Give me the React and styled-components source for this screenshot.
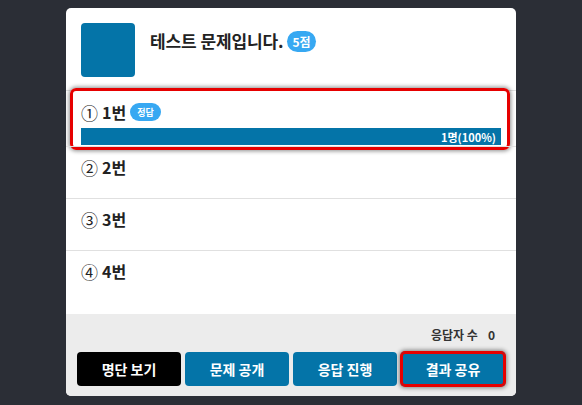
import React from "react";
import styled, { createGlobalStyle, css } from "styled-components";

const Global = createGlobalStyle`
  html, body { margin: 0; padding: 0; background: #2b2e36; }
  body { font-family: "Noto Sans CJK KR", "Noto Sans", sans-serif; }
  * { box-sizing: border-box; }
`;

const Page = styled.div`
  width: 582px;
  height: 405px;
  padding-top: 8px;
  display: flex;
  justify-content: center;
`;

const Card = styled.div`
  width: 450px;
  height: 388px;
  background: #fff;
  border-radius: 5px;
  overflow: hidden;
  display: flex;
  flex-direction: column;
`;

const Header = styled.div`
  display: flex;
  gap: 15px;
  padding: 15px 15px 13px;
`;

const Thumb = styled.div`
  width: 54px;
  height: 54px;
  border-radius: 4px;
  background: #0474a8;
  flex-shrink: 0;
`;

const Title = styled.div`
  display: flex;
  align-items: center;
  gap: 3px;
  height: 24px;
  margin-top: 5px;
  font-size: 17px;
  font-weight: 700;
  color: #222;
  letter-spacing: -0.1px;
`;

const Badge = styled.span`
  display: inline-flex;
  align-items: center;
  justify-content: center;
  background: #37a8f2;
  color: #fff;
  font-weight: 700;
  border-radius: 999px;
  ${(p) =>
    p.$small
      ? css`
          font-size: 9px;
          height: 18px;
          padding: 0 7px;
          margin-left: 4px;
        `
      : css`
          font-size: 12px;
          height: 21px;
          padding: 0 6px;
          margin-top: 2px;
        `}
`;

const List = styled.div`
  flex: 1;
  display: flex;
  flex-direction: column;
`;

const Row = styled.div`
  position: relative;
  border-top: 1px solid #e0e0e0;
  padding: ${(p) => (p.$tall ? "10px" : "9px")} 15px 0;
  height: ${(p) => (p.$tall ? "56px" : "52px")};
  &:last-child { height: auto; flex: 1; }
`;

const Label = styled.div`
  display: flex;
  align-items: center;
  height: 22px;
  font-size: 16px;
  font-weight: 700;
  color: #222;
`;

const Circle = styled.span`
  font-weight: 400;
  font-size: 17px;
  margin-right: 4px;
  color: #222;
`;

const Bar = styled.div`
  margin-top: 5px;
  height: 17px;
  background: #0474a8;
  color: #fff;
  font-size: 11px;
  font-weight: 700;
  display: flex;
  align-items: center;
  justify-content: flex-end;
  padding-right: 5px;
`;

const Highlight = styled.div`
  position: absolute;
  left: 4px;
  right: 6px;
  top: -3px;
  bottom: -4px;
  border: 3px solid #e60000;
  border-radius: 6px;
  box-shadow: 0 0 4px 1px rgba(0, 0, 0, 0.45);
  pointer-events: none;
`;

const Footer = styled.div`
  background: #ececec;
  padding: 10px 11px 10px;
  display: flex;
  flex-direction: column;
  gap: 8px;
`;

const Count = styled.div`
  align-self: flex-end;
  margin-right: 10px;
  font-size: 12px;
  font-weight: 700;
  color: #333;
  height: 20px;
  display: flex;
  align-items: center;
  gap: 10px;
`;

const Buttons = styled.div`
  display: grid;
  grid-template-columns: repeat(4, 1fr);
  gap: 4px;
`;

const Button = styled.button`
  height: 34px;
  border: none;
  border-radius: 4px;
  background: ${(p) => (p.$dark ? "#000" : "#0474a8")};
  color: #fff;
  font-family: inherit;
  font-size: 14px;
  font-weight: 700;
  ${(p) =>
    p.$focus &&
    css`
      box-shadow: inset 0 0 0 2px #e60000, 0 0 0 1px #e60000,
        0 0 4px 2px rgba(0, 0, 0, 0.45);
    `}
`;

const options = [
  { n: "①", label: "1번", correct: true, pct: "1명(100%)" },
  { n: "②", label: "2번" },
  { n: "③", label: "3번" },
  { n: "④", label: "4번" },
];

export default function App() {
  return (
    <>
      <Global />
      <Page>
        <Card>
          <Header>
            <Thumb />
            <Title>
              테스트 문제입니다.
              <Badge>5점</Badge>
            </Title>
          </Header>
          <List>
            {options.map((o) => (
              <Row key={o.label} $tall={o.correct}>
                <Label>
                  <Circle>{o.n}</Circle>
                  {o.label}
                  {o.correct && <Badge $small>정답</Badge>}
                </Label>
                {o.pct && <Bar>{o.pct}</Bar>}
                {o.correct && <Highlight />}
              </Row>
            ))}
          </List>
          <Footer>
            <Count>
              <span>응답자 수</span>
              <span>0</span>
            </Count>
            <Buttons>
              <Button $dark>명단 보기</Button>
              <Button>문제 공개</Button>
              <Button>응답 진행</Button>
              <Button $focus>결과 공유</Button>
            </Buttons>
          </Footer>
        </Card>
      </Page>
    </>
  );
}
